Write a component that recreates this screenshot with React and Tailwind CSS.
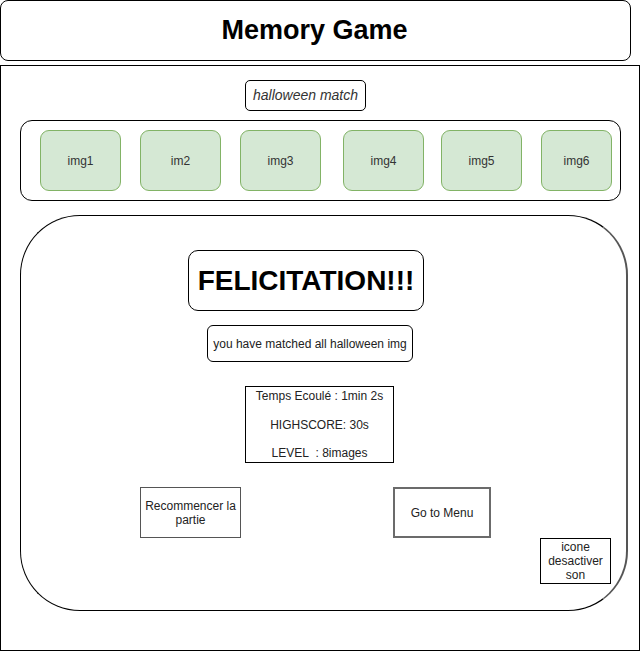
import React from 'react';

const cards = [
  { label: 'img1', cls: 'ml-[19px] w-[81px]' },
  { label: 'im2', cls: 'ml-[19px] w-[81px]' },
  { label: 'img3', cls: 'ml-[19px] w-[81px]' },
  { label: 'img4', cls: 'ml-[22px] w-[81px]' },
  { label: 'img5', cls: 'ml-[17px] w-[81px]' },
  { label: 'img6', cls: 'ml-[19px] w-[71px]' },
];

export default function App() {
  return (
    <div className="w-[641px] h-[651px] bg-white text-[#222] font-['Liberation_Sans',Arial,sans-serif]">
      {/* header */}
      <div className="w-[631px] h-[61px] border border-black rounded-lg flex items-center justify-center">
        <h1 className="text-[27px] font-bold text-black leading-none -ml-[2px]">Memory Game</h1>
      </div>

      {/* main frame */}
      <div className="mt-[4px] w-[640px] h-[586px] border border-black flex flex-col items-start">
        <div className="ml-[244px] mt-[14px] w-[121px] h-[31px] border border-black rounded-[5px] flex items-center justify-center">
          <span className="italic text-[14px] text-[#333]">halloween match</span>
        </div>

        {/* image strip */}
        <div className="ml-[19px] mt-[9px] w-[601px] h-[81px] border border-black rounded-[12px] flex items-center">
          {cards.map((c) => (
            <div
              key={c.label}
              className={`${c.cls} h-[61px] bg-[#d5e8d4] border border-[#82b366] rounded-[9px] flex items-center justify-center text-[12px] text-[#333]`}
            >
              {c.label}
            </div>
          ))}
        </div>

        {/* result panel */}
        <div className="ml-[19px] mt-[14px] w-[608px] h-[396px] border border-black border-r-[#555] border-r-2 rounded-[60px] flex flex-col items-start">
          <div className="ml-[167px] mt-[34px] w-[236px] h-[61px] border border-black rounded-[10px] flex items-center justify-center">
            <span className="text-[28px] font-bold text-black">FELICITATION!!!</span>
          </div>

          <div className="ml-[186px] mt-[14px] w-[206px] h-[37px] border border-black rounded-[6px] flex items-center justify-center">
            <span className="text-[12px] text-[#222]">you have matched all halloween img</span>
          </div>

          <div className="ml-[224px] mt-[24px] w-[149px] h-[77px] border border-black flex flex-col items-center justify-between py-[2px] text-[12px] leading-[14px] text-[#222]">
            <span>Temps Ecoulé : 1min 2s</span>
            <span>HIGHSCORE: 30s</span>
            <span>LEVEL&nbsp; : 8images</span>
          </div>

          <div className="mt-[24px] flex items-start">
            <div className="ml-[119px] w-[101px] h-[51px] border-[1.5px] border-[#555] flex items-center justify-center text-center text-[12px] leading-[14px] text-[#222]">
              Recommencer la<br />partie
            </div>
            <div className="ml-[152px] w-[98px] h-[51px] border-2 border-[#6b6b6b] flex items-center justify-center text-[12px] text-[#222]">
              Go to Menu
            </div>
          </div>

          <div className="ml-[519px] w-[71px] h-[46px] border border-black flex items-center justify-center text-center text-[12px] leading-[14px] text-[#222]">
            icone<br />desactiver<br />son
          </div>
        </div>
      </div>
    </div>
  );
}
